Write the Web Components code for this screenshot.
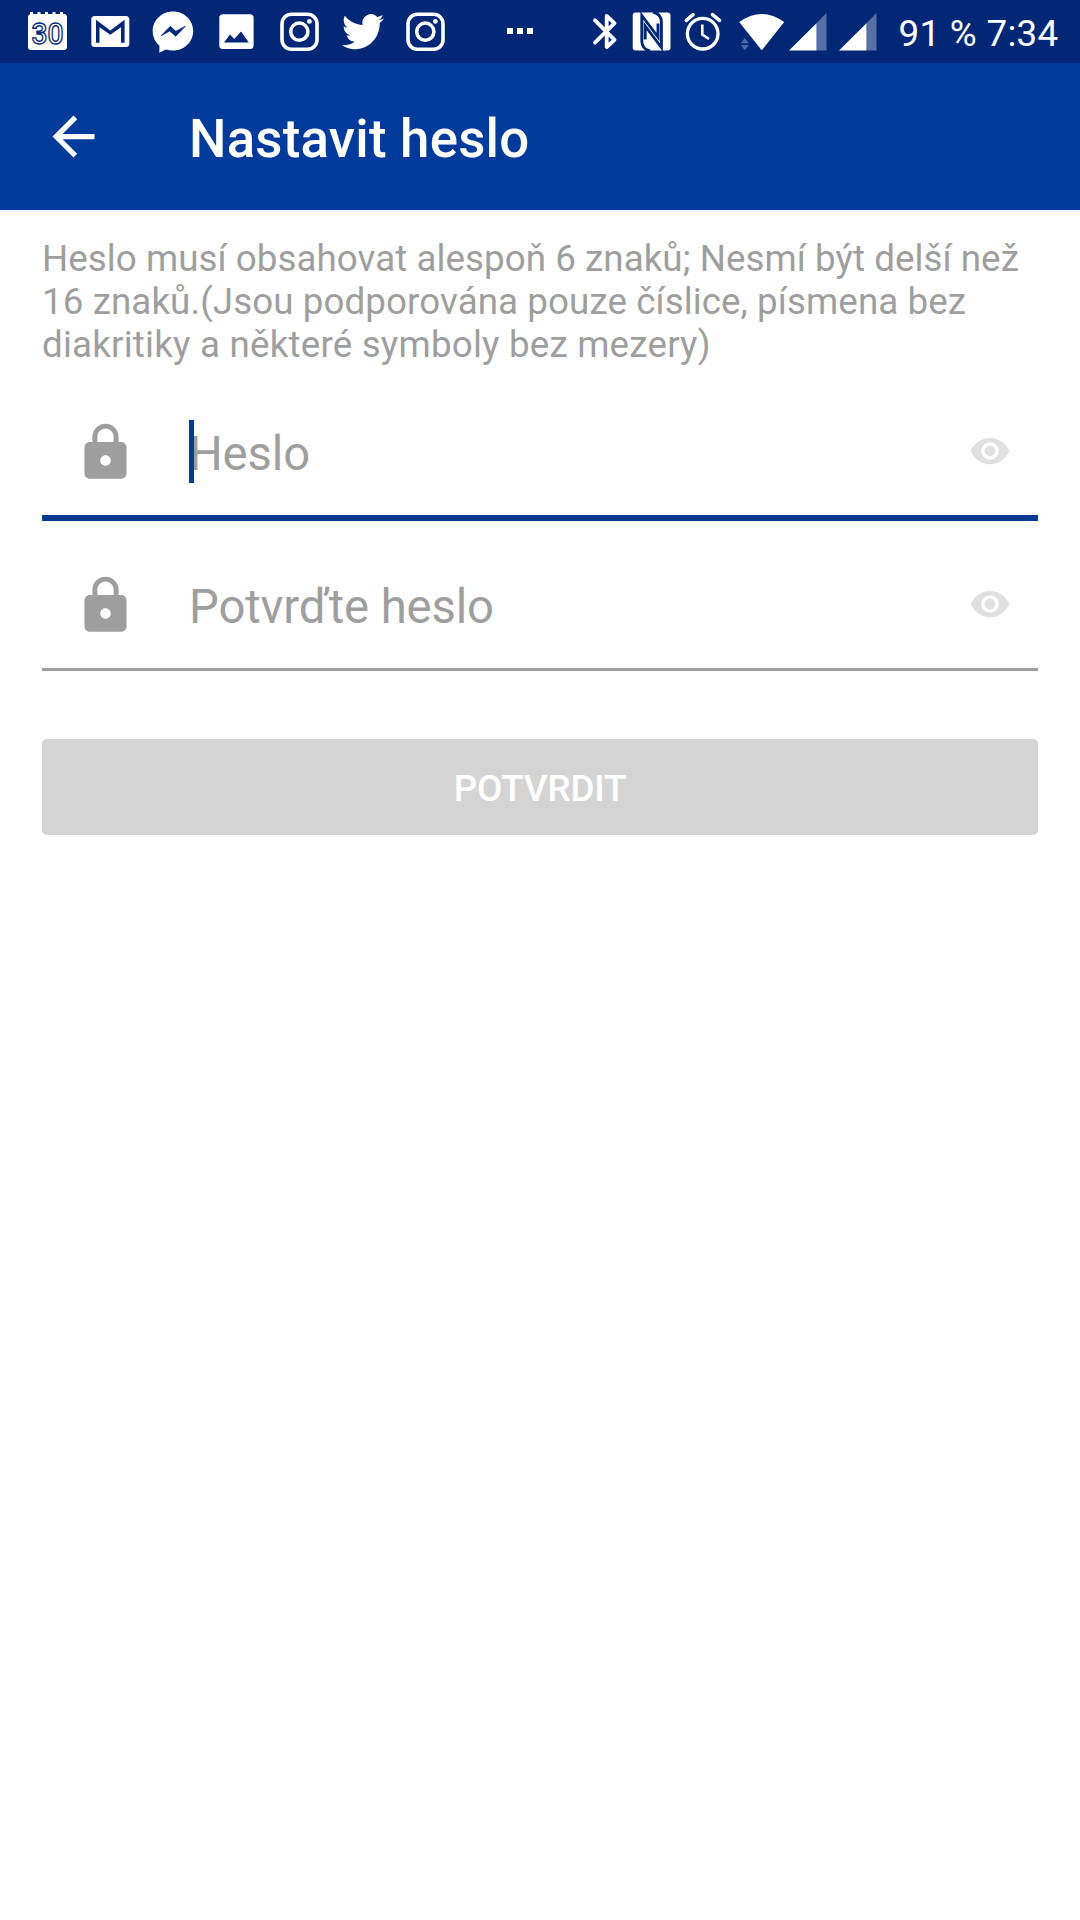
<!DOCTYPE html>
<html lang="cs">
<head>
<meta charset="utf-8">
<title>Nastavit heslo</title>
<style>
html,body{margin:0;background:#fefefe}
body{font-family:Roboto,"Noto Sans",sans-serif;width:1080px;height:1920px;overflow:hidden}
</style>
</head>
<body>
<password-screen></password-screen>
<script>
const define = (name, html, setup) => customElements.define(name, class extends HTMLElement {
  connectedCallback() {
    if (this.shadowRoot) return;
    const t = document.createElement('template');
    t.innerHTML = html;
    this.attachShadow({mode: 'open'}).append(t.content.cloneNode(true));
    if (setup) setup(this, this.shadowRoot);
  }
});

const insta = [63, '<g fill="none" stroke="#fff"><rect x="14" y="14.2" width="35" height="35" rx="9.5" stroke-width="3.6"/><circle cx="31.3" cy="31.7" r="8.6" stroke-width="3.5"/></g><circle cx="41.4" cy="21.4" r="2.4"/>'];
const signal = [50, '<path d="M39.500 13V50.500H29.500V23.200Z" fill="#5870a8"/><path d="M29.500 23.200V50.500H2Z"/>'];
// name: [cell width, artwork]
const ICONS = {
  calendar: [63, '<path d="M12 17a3 3 0 0 1 2-2.700V12h3v2h4.500v-2h3v2H29v-2h3v2h4.500v-2h3v2H44v-2h3v2a3 3 0 0 1 4 3V47a3 3 0 0 1-3 3H15a3 3 0 0 1-3-3Z"/><text x="15.500" y="43.500" font-family="Roboto" font-weight="500" font-size="30" textLength="32" lengthAdjust="spacingAndGlyphs" fill="#fff" stroke="#022777" stroke-width="1.350">30</text>'],
  gmail: [63, '<rect x="12.300" y="16" width="38" height="31" rx="3.500"/><path d="M17 42.700V19.800L31.300 30.400 45.600 19.800V42.700H42V27.300L31.300 34.800 20.500 27.300V42.700Z" fill="#022777"/>'],
  messenger: [63, '<path d="M31 11.500c-11.300 0-20.300 8.600-20.300 19.500 0 5.900 2.500 11 6.700 14.600v7.200l6.500-3.300c2.200.7 4.600 1 7.100 1 11.300 0 20.200-8.600 20.200-19.500S42.300 11.500 31 11.500Z"/><path d="M19 35.800 28.300 26.300 33.800 31.300 43.300 26.200 33.700 36.300 27.800 31Z" fill="#022777" stroke="#022777" stroke-width=".7"/>'],
  picture: [63, '<rect x="14.300" y="14.300" width="34.300" height="34.700" rx="3.500"/><path d="M19 42.500 25 34.500 29.300 39 36 31.500 43.800 42.500Z" fill="#022777"/>'],
  insta,
  twitter: [63, '<path transform="translate(11 10.200) scale(1.750 1.790)" d="M23.953 4.570a10 10 0 0 1-2.825.775 4.958 4.958 0 0 0 2.163-2.723c-.951.555-2.005.959-3.127 1.184a4.920 4.920 0 0 0-8.384 4.482C7.690 8.095 4.067 6.130 1.640 3.162a4.822 4.822 0 0 0-.666 2.475c0 1.710.87 3.213 2.188 4.096a4.904 4.904 0 0 1-2.228-.616v.06a4.923 4.923 0 0 0 3.946 4.827 4.996 4.996 0 0 1-2.212.085 4.936 4.936 0 0 0 4.604 3.417 9.867 9.867 0 0 1-6.102 2.105c-.39 0-.779-.023-1.170-.067a13.995 13.995 0 0 0 7.557 2.209c9.053 0 13.998-7.496 13.998-13.985 0-.21 0-.42-.015-.63A9.935 9.935 0 0 0 24 4.590z"/>'],
  more: [126, '<path d="M50 28h6v6h-6zM60 28h6v6h-6zM70 28h6v6h-6z"/>'],
  bluetooth: [43, '<path d="M12 20.300 31.500 39.800 23.700 47V16L31.500 23.200 12 42.700" fill="none" stroke="#fff" stroke-width="3.800" stroke-linecap="round" stroke-linejoin="round"/>'],
  nfc: [52, '<rect x="6.700" y="12.600" width="37.800" height="37.800" rx="3"/><g fill="none" stroke="#022777" stroke-width="2.900"><path d="M24 51Q15.800 49 15.800 41V15.500L32 37V23.500"/><path d="M27 12Q35.400 14 35.400 22V47.500L19.200 26V39.500"/></g>'],
  alarm: [50, '<g fill="none" stroke="#fff"><circle cx="24.700" cy="33.700" r="15.300" stroke-width="3.300"/><path d="M24.300 24.500V34.600L31 39" stroke-width="2.600"/><path d="M8.300 20.400 15 14.600M41.500 20.400 34.500 14.600" stroke-width="3.600" stroke-linecap="round"/></g>'],
  wifi: [59, '<path d="M11.200 22Q33.700 5.800 56.200 22L33.700 50.300Z"/><path d="M12.700 43.300h8.200L16.800 38zM12.700 45h8.200L16.800 50.300z" fill="#4a69a6"/>'],
  signal
};

define('status-icon', `<style>:host{display:block;flex:none;height:63px}svg{display:block;fill:#fff}</style>`, (host, root) => {
  const [w, art] = ICONS[host.getAttribute('name')];
  const box = document.createElement('div');
  box.innerHTML = `<svg width="${w}" height="63" viewBox="0 0 ${w} 63">${art}</svg>`;
  root.append(box.firstChild);
});

define('status-bar', `<style>
:host{display:flex;height:63px;background:#022777;color:#fff;padding-left:16px;box-sizing:border-box}
span{font-size:36.750px;line-height:43px;margin:11.500px 0 0 11.500px;letter-spacing:.3px;white-space:nowrap}
</style>
<status-icon name="calendar"></status-icon><status-icon name="gmail"></status-icon><status-icon name="messenger"></status-icon><status-icon name="picture"></status-icon><status-icon name="insta"></status-icon><status-icon name="twitter"></status-icon><status-icon name="insta"></status-icon><status-icon name="more"></status-icon><status-icon name="bluetooth"></status-icon><status-icon name="nfc"></status-icon><status-icon name="alarm"></status-icon><status-icon name="wifi"></status-icon><status-icon name="signal"></status-icon><status-icon name="signal"></status-icon><span>91 % 7:34</span>`);

define('app-bar', `<style>
:host{display:flex;align-items:center;height:147px;background:#003a9b;color:#fff;padding-left:42px}
svg{fill:#fff;width:63px;height:63px;margin-right:84px}
h1{margin:5px 0 0;font-size:52.800px;font-weight:500;line-height:62px;letter-spacing:.22px;white-space:nowrap}
</style>
<svg viewBox="0 0 24 24"><path d="M20 11H7.830l5.590-5.590L12 4l-8 8 8 8 1.410-1.410L7.830 13H20v-2z"/></svg>
<h1><slot></slot></h1>`);

define('password-field', `<style>
:host{display:flex;box-sizing:border-box;height:153px;padding:0 27px 0 31.500px;border-bottom:3px solid #9e9e9e;align-items:flex-start}
:host([focused]){border-bottom:6px solid #053a92}
.lock{width:63px;height:63px;margin:52.500px 52.500px 0 0;fill:#9e9e9e}
.input{position:relative;flex:1;margin-top:58px;font-size:47.250px;line-height:56px;letter-spacing:-.12px;color:#9e9e9e;white-space:nowrap}
.caret{display:none;position:absolute;left:0;top:-6px;width:5px;height:63px;background:#053a92}
:host([focused]) .caret{display:block}
.eye{width:42px;height:42px;margin-top:62px;fill:#e0e0e0}
</style>
<svg class="lock" viewBox="0 0 24 24"><path d="M18 8h-1V6c0-2.760-2.240-5-5-5S7 3.240 7 6v2H6c-1.100 0-2 .9-2 2v10c0 1.100.9 2 2 2h12c1.100 0 2-.9 2-2V10c0-1.100-.9-2-2-2zm-6 9c-1.100 0-2-.9-2-2s.9-2 2-2 2 .9 2 2-.9 2-2 2zm3.100-9H8.900V6c0-1.710 1.390-3.100 3.100-3.100s3.100 1.390 3.100 3.100v2z"/></svg>
<div class="input"><slot></slot><i class="caret"></i></div>
<svg class="eye" viewBox="0 0 24 24"><path d="M12 4.500C7 4.500 2.730 7.610 1 12c1.730 4.390 6 7.500 11 7.500s9.270-3.110 11-7.500c-1.730-4.390-6-7.500-11-7.500zM12 17c-2.760 0-5-2.240-5-5s2.240-5 5-5 5 2.240 5 5-2.240 5-5 5zm0-8c-1.660 0-3 1.340-3 3s1.340 3 3 3 3-1.340 3-3-1.340-3-3-3z"/></svg>`);

define('confirm-button', `<style>
:host{display:flex;align-items:center;justify-content:center;height:96px;border-radius:5px;background:#d4d4d4;color:#fff;font-size:36.750px;font-weight:500;line-height:43px;letter-spacing:-.15px}
span{margin-top:2px}
</style><span><slot></slot></span>`);

define('password-screen', `<style>
:host{display:flex;flex-direction:column;width:1080px;height:1920px}
main{display:flex;flex-direction:column;padding:27px 42px 0}
p{margin:0 -20px 0 0;font-size:36.750px;line-height:43px;color:#9e9e9e;white-space:nowrap}
.l1{letter-spacing:.045px}
.l2{letter-spacing:.075px}
.l3{letter-spacing:.2px}
.first{height:153px;margin-top:2px}
.second{height:150px}
confirm-button{margin-top:68px}
</style>
<status-bar></status-bar>
<app-bar>Nastavit heslo</app-bar>
<main>
<p><span class="l1">Heslo musí obsahovat alespoň 6 znaků; Nesmí být delší než</span><br><span class="l2">16 znaků.(Jsou podporována pouze číslice, písmena bez</span><br><span class="l3">diakritiky a některé symboly bez mezery)</span></p>
<password-field class="first" focused>Heslo</password-field>
<password-field class="second">Potvrďte heslo</password-field>
<confirm-button>POTVRDIT</confirm-button>
</main>`);
</script>
</body>
</html>
